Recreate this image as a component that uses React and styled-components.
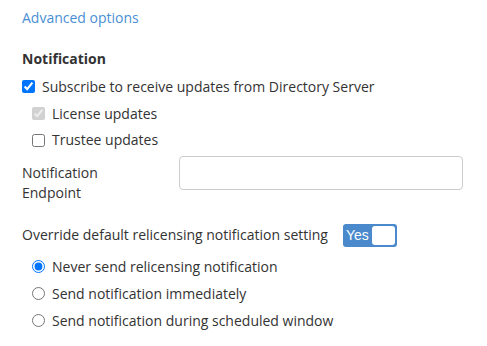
import React from "react";
import styled, { createGlobalStyle } from "styled-components";

const Global = createGlobalStyle`
  html, body { margin: 0; padding: 0; background: #fff; }
  body { font-family: "Open Sans", "Noto Sans", sans-serif; font-size: 14px; color: #333; }
  * { box-sizing: border-box; }
`;

const Page = styled.div`
  display: flex;
  flex-direction: column;
  padding: 8px 24px 0 22px;
`;

const Link = styled.a`
  color: #4a8fd4;
  line-height: 20px;
  text-decoration: none;
  cursor: pointer;
`;

const Heading = styled.div`
  font-weight: 700;
  line-height: 20px;
  margin-top: 21px;
  margin-bottom: 4px;
`;

const Row = styled.label`
  display: flex;
  align-items: center;
  gap: 7px;
  height: ${(p) => p.$h || 27}px;
  padding-left: ${(p) => (p.$indent ? 10 : 0)}px;
  line-height: 20px;
`;

const Box = styled.input`
  width: 13px;
  height: 13px;
  margin: 0;
  flex: none;
`;

const FieldRow = styled.div`
  display: grid;
  grid-template-columns: 157px 1fr;
  align-items: start;
  margin-top: 3px;
`;

const FieldLabel = styled.div`
  padding-top: 7px;
  line-height: 20px;
`;

const TextInput = styled.input`
  height: 34px;
  width: 100%;
  border: 1px solid #ccc;
  border-radius: 4px;
  padding: 6px 10px;
  font: inherit;
  outline: none;
`;

const ToggleRow = styled.div`
  display: flex;
  align-items: center;
  height: 24px;
  margin-top: 20px;
  margin-bottom: 6px;
  line-height: 20px;
`;

const Toggle = styled.div`
  margin-left: 15px;
  width: 54px;
  height: 23px;
  background: #4a89cb;
  border-radius: 3px;
  display: flex;
  align-items: center;
  justify-content: space-between;
  padding: 1px 2px 1px 3px;
  color: #fff;
  font-family: "Liberation Sans", Arial, sans-serif;
  font-size: 14px;
`;

const Knob = styled.div`
  width: 23px;
  height: 19px;
  background: #fff;
  border-radius: 3px;
`;

export default function App() {
  return (
    <>
      <Global />
      <Page>
        <Link>Advanced options</Link>
        <Heading>Notification</Heading>
        <Row>
          <Box type="checkbox" defaultChecked />
          Subscribe to receive updates from Directory Server
        </Row>
        <Row $indent>
          <Box type="checkbox" defaultChecked disabled />
          License updates
        </Row>
        <Row $indent $h={26}>
          <Box type="checkbox" />
          Trustee updates
        </Row>
        <FieldRow>
          <FieldLabel>
            Notification
            <br />
            Endpoint
          </FieldLabel>
          <TextInput type="text" />
        </FieldRow>
        <ToggleRow>
          Override default relicensing notification setting
          <Toggle>
            Yes
            <Knob />
          </Toggle>
        </ToggleRow>
        <Row $indent>
          <Box type="radio" name="r" defaultChecked />
          Never send relicensing notification
        </Row>
        <Row $indent>
          <Box type="radio" name="r" />
          Send notification immediately
        </Row>
        <Row $indent>
          <Box type="radio" name="r" />
          Send notification during scheduled window
        </Row>
      </Page>
    </>
  );
}
